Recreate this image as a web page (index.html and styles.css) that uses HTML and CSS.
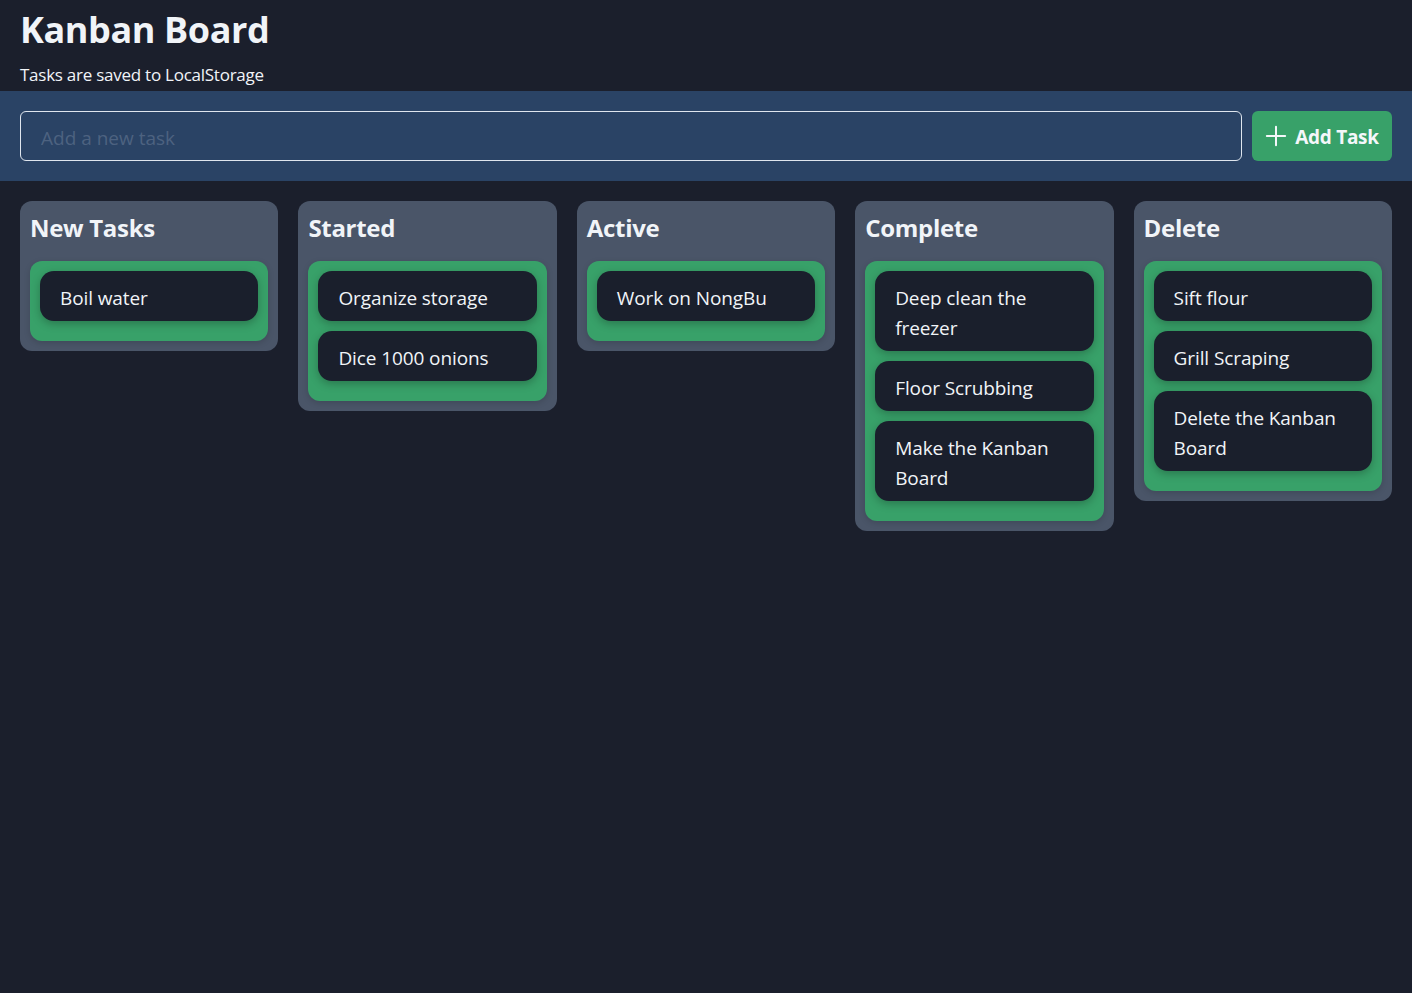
FILE: index.html
```html
<!DOCTYPE html>
<html lang="en">
<head>
<meta charset="utf-8">
<title>Kanban Board</title>
<link rel="stylesheet" href="styles.css">
</head>
<body>
<header class="header">
  <h1 class="title">Kanban Board</h1>
  <p class="subtitle">Tasks are saved to LocalStorage</p>
</header>
<section class="toolbar">
  <input class="task-input" type="text" placeholder="Add a new task">
  <button class="add-btn" type="button">
    <svg class="plus" viewBox="0 0 24 24" width="22" height="22" aria-hidden="true"><path d="M12 2v20M2 12h20" stroke="currentColor" stroke-width="2.2" fill="none" stroke-linecap="round"/></svg>
    <span>Add Task</span>
  </button>
</section>
<main class="board">
  <div class="column">
    <h2 class="col-title">New Tasks</h2>
    <div class="dropzone">
      <div class="card">Boil water</div>
    </div>
  </div>
  <div class="column">
    <h2 class="col-title">Started</h2>
    <div class="dropzone">
      <div class="card">Organize storage</div>
      <div class="card">Dice 1000 onions</div>
    </div>
  </div>
  <div class="column">
    <h2 class="col-title">Active</h2>
    <div class="dropzone">
      <div class="card">Work on NongBu</div>
    </div>
  </div>
  <div class="column">
    <h2 class="col-title">Complete</h2>
    <div class="dropzone">
      <div class="card">Deep clean the freezer</div>
      <div class="card">Floor Scrubbing</div>
      <div class="card">Make the Kanban Board</div>
    </div>
  </div>
  <div class="column">
    <h2 class="col-title">Delete</h2>
    <div class="dropzone">
      <div class="card">Sift flour</div>
      <div class="card">Grill Scraping</div>
      <div class="card">Delete the Kanban Board</div>
    </div>
  </div>
</main>
</body>
</html>
```
FILE: styles.css
```css
* { box-sizing: border-box; }
html, body {
  margin: 0;
  padding: 0;
  background: #1b1f2c;
  color: #f1f4f8;
  font-family: "Open Sans", "Noto Sans", sans-serif;
}
.header {
  padding: 6px 20px 0 20px;
  height: 91px;
}
.title {
  margin: 0;
  font-size: 36px;
  line-height: 48px;
  font-weight: 700;
  letter-spacing: -0.4px;
}
.subtitle {
  margin: 10px 0 0 0;
  font-size: 17px;
  line-height: 22px;
  letter-spacing: -0.25px;
}
.toolbar {
  background: #2a4365;
  padding: 20px;
  display: flex;
  gap: 10px;
  height: 90px;
}
.task-input {
  flex: 1;
  height: 50px;
  background: transparent;
  border: 1px solid #dfe6ee;
  border-radius: 6px;
  padding: 3px 20px 0 20px;
  font-family: inherit;
  font-size: 19px;
  color: #f1f4f8;
  outline: none;
}
.task-input::placeholder { color: #4d6280; }
.add-btn {
  width: 140px;
  height: 50px;
  background: #38a169;
  border: none;
  border-radius: 6px;
  color: #f4f7fa;
  font-family: inherit;
  font-size: 19px;
  font-weight: 700;
  display: flex;
  align-items: center;
  justify-content: center;
  gap: 8px;
  padding: 2px 0 0 0;
  letter-spacing: -0.3px;
}
.plus { flex: none; margin-top: -3px; }
.board {
  display: grid;
  grid-template-columns: repeat(5, 1fr);
  gap: 20px;
  padding: 20px;
  align-items: start;
}
.column {
  background: #4a5568;
  border-radius: 12px;
  padding: 10px;
}
.col-title {
  margin: 0 0 16px 0;
  font-size: 24px;
  line-height: 34px;
  font-weight: 700;
  letter-spacing: -0.3px;
}
.dropzone {
  background: #38a169;
  border-radius: 12px;
  padding: 10px 10px 20px 10px;
  display: flex;
  flex-direction: column;
  gap: 10px;
  box-shadow: 0 2px 6px rgba(0,0,0,0.15);
}
.card {
  background: #1a1f2c;
  border-radius: 14px;
  padding: 12px 20px 8px 20px;
  font-size: 19px;
  line-height: 30px;
  letter-spacing: -0.1px;
  box-shadow: 0 3px 8px rgba(0,0,0,0.25);
}
```
